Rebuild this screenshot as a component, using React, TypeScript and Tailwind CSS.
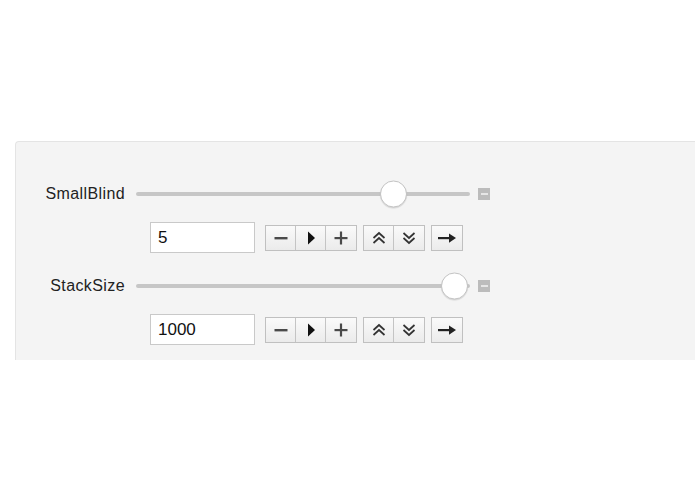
import React from 'react';

type Control = { label: string; value: string; pos: number };

const controls: Control[] = [
  { label: 'SmallBlind', value: '5', pos: 0.771 },
  { label: 'StackSize', value: '1000', pos: 0.954 },
];

const TRACK_W = 334;
const THUMB = 27;

function Minus() {
  return (
    <svg width="16" height="16" viewBox="0 0 16 16">
      <rect x="1.5" y="7" width="13" height="2.4" fill="#4a4a4a" />
    </svg>
  );
}

function Play() {
  return (
    <svg width="16" height="16" viewBox="0 0 16 16">
      <path d="M5 1.5 L12 8 L5 14.5 Z" fill="#111" />
    </svg>
  );
}

function Plus() {
  return (
    <svg width="16" height="16" viewBox="0 0 16 16">
      <rect x="1.5" y="7" width="13" height="2.2" fill="#4a4a4a" />
      <rect x="6.9" y="1.5" width="2.2" height="13" fill="#4a4a4a" />
    </svg>
  );
}

function DoubleUp() {
  return (
    <svg width="16" height="16" viewBox="0 0 16 16" fill="none" stroke="#333" strokeWidth="1.7">
      <path d="M2.5 8 L8 3 L13.5 8" />
      <path d="M2.5 13 L8 8 L13.5 13" />
    </svg>
  );
}

function DoubleDown() {
  return (
    <svg width="16" height="16" viewBox="0 0 16 16" fill="none" stroke="#333" strokeWidth="1.7">
      <path d="M2.5 3 L8 8 L13.5 3" />
      <path d="M2.5 8 L8 13 L13.5 8" />
    </svg>
  );
}

function ArrowRight() {
  return (
    <svg width="20" height="16" viewBox="0 0 20 16">
      <rect x="1" y="7" width="12" height="2.2" fill="#222" />
      <path d="M12 3.5 L19 8.1 L12 12.7 Z" fill="#222" />
    </svg>
  );
}

function Btn({ children, last }: { children: React.ReactNode; last?: boolean }) {
  return (
    <div
      className={`flex h-full w-[30px] items-center justify-center bg-gradient-to-b from-[#fafafa] to-[#ebebeb] ${
        last ? '' : 'border-r border-[#c4c4c4]'
      }`}
    >
      {children}
    </div>
  );
}

function Row({ c }: { c: Control }) {
  const left = c.pos * TRACK_W - THUMB / 2;
  return (
    <div className="flex flex-col">
      <div className="flex h-[30px] items-center">
        <div className="w-[110px] pr-[1px] text-right text-[16px] tracking-[0.4px] text-[#222]">{c.label}</div>
        <div className="ml-[10px] relative h-[4px] w-[334px] rounded-full bg-[#c6c6c6]">
          <div
            className="absolute top-1/2 h-[27px] w-[27px] -translate-y-1/2 rounded-full border border-[#c3c3c3] bg-white shadow-[0_1px_1px_rgba(0,0,0,0.12)]"
            style={{ left }}
          />
        </div>
        <div className="ml-[8px] flex h-[12px] w-[12px] items-center justify-center bg-[#bcbcbc]">
          <div className="h-[2px] w-[7px] bg-[#e6e6e6]" />
        </div>
      </div>
      <div className="mt-[13px] flex items-center pl-[134px]">
        <div className="flex h-[31px] w-[105px] items-center border border-[#c9c9c9] bg-white pl-[7px] text-[17px] text-[#111]">
          {c.value}
        </div>
        <div className="ml-[10px] flex h-[26px] border border-[#c0c0c0]">
          <Btn><Minus /></Btn>
          <Btn><Play /></Btn>
          <Btn last><Plus /></Btn>
        </div>
        <div className="ml-[6px] flex h-[26px] border border-[#c0c0c0]">
          <Btn><DoubleUp /></Btn>
          <Btn last><DoubleDown /></Btn>
        </div>
        <div className="ml-[6px] flex h-[26px] w-[32px] items-center justify-center border border-[#c0c0c0] bg-gradient-to-b from-[#fafafa] to-[#ebebeb]">
          <ArrowRight />
        </div>
      </div>
    </div>
  );
}

export default function App() {
  return (
    <div className="h-[494px] w-[695px] overflow-hidden bg-white font-['Liberation_Sans',Arial,sans-serif]">
      <div className="ml-[15px] mt-[141px] flex h-[219px] flex-col gap-[18px] rounded-tl-[4px] border-l border-t border-[#e4e4e4] bg-[#f4f4f4] pt-[37px]">
        {controls.map((c) => (
          <Row key={c.label} c={c} />
        ))}
      </div>
    </div>
  );
}
